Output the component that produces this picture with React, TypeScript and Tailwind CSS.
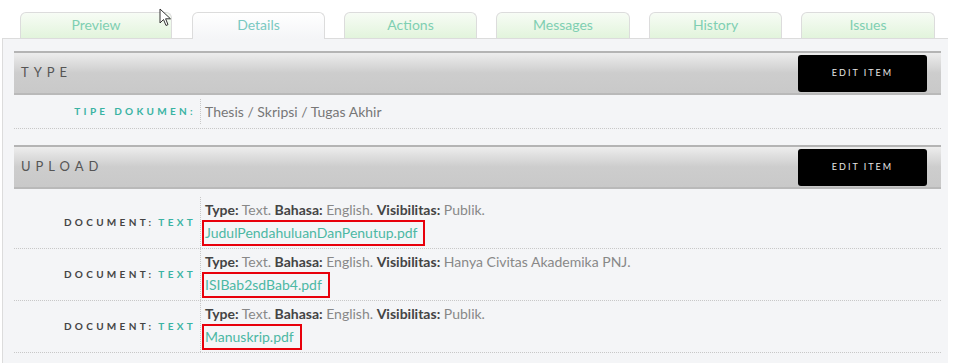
import React from "react";

const tabs = [
  { label: "Preview", w: "w-[152px]", active: false },
  { label: "Details", w: "w-[133px]", active: true },
  { label: "Actions", w: "w-[133px]", active: false },
  { label: "Messages", w: "w-[134px]", active: false },
  { label: "History", w: "w-[133px]", active: false },
  { label: "Issues", w: "w-[134px]", active: false },
];

const docs = [
  { vis: "Publik.", file: "JudulPendahuluanDanPenutup.pdf" },
  { vis: "Hanya Civitas Akademika PNJ.", file: "ISIBab2sdBab4.pdf" },
  { vis: "Publik.", file: "Manuskrip.pdf" },
];

function Header({ title }: { title: string }) {
  return (
    <div className="w-[927px] h-[44px] flex items-center justify-between pl-[7px] pr-[14px] border-t-2 border-b-2 border-t-[#b4b4b4] border-b-[#b9b9b9] bg-gradient-to-b from-[#ededed] via-[#cdcdcd] to-[#c9c9c9]">
      <span className="text-[13px] tracking-[5px] text-[#555]">{title}</span>
      <button className="w-[129px] h-[37px] bg-black rounded-[3px] text-[9px] tracking-[2px] text-[#e6e6e6]">
        EDIT ITEM
      </button>
    </div>
  );
}

export default function App() {
  return (
    <div
      className="relative w-[962px] h-[363px] overflow-hidden bg-white"
      style={{ fontFamily: "Lato, 'Noto Sans', sans-serif" }}
    >
      {/* tabs */}
      <div className="flex items-end pt-[12px] pl-[20px] gap-[19px]">
        {tabs.map((t, i) => (
          <div
            key={t.label}
            className={
              (i === 1 ? "ml-[1px] " : "") +
              t.w +
              " " +
              (t.active
                ? "relative z-10 h-[27px] -mb-px pb-[3px] rounded-t-[6px] border border-b-0 border-[#dcdcdc] bg-gradient-to-b from-white to-[#f4f5f7] text-[#7ac9c1]"
                : "h-[26px] pb-[3px] rounded-t-[6px] border border-b-0 border-[#dcdcdc] bg-gradient-to-b from-[#f7fcf5] to-[#e2f4dc] text-[#7fcfb2]") +
              " flex items-center justify-center text-[14px]"
            }
          >
            {t.label}
          </div>
        ))}
      </div>

      {/* panel */}
      <div className="ml-[2px] w-[946px] h-[330px] border-l border-t border-[#dcdcdc] bg-[#f4f5f7] pl-[11px] pt-[12px]">
        <Header title="TYPE" />
        <div className="w-[927px] h-[34px] flex border-b border-dotted border-[#c8c8c8]">
          <div className="w-[186px] flex items-center justify-end pr-[4px] text-[10px] font-bold tracking-[3.3px] text-[#3ab3a3]">
            TIPE DOKUMEN:
          </div>
          <div className="flex items-center pl-[4px] border-l border-dotted border-[#c8c8c8] my-[4px] text-[14px] text-[#777]">
            Thesis / Skripsi / Tugas Akhir
          </div>
        </div>

        <div className="mt-[16px]">
          <Header title="UPLOAD" />
        </div>
        <div className="mt-[8px]">
          {docs.map((d) => (
            <div key={d.file} className="w-[927px] h-[52px] flex border-b border-dotted border-[#c8c8c8]">
              <div className="w-[186px] flex items-center justify-end pr-[4px] text-[10px] font-bold tracking-[3.3px]">
                <span className="text-[#444]">DOCUMENT:</span>
                <span className="text-[#3ab3a3] ml-[4px]">TEXT</span>
              </div>
              <div className="flex flex-col pl-[1px] pt-[3px] border-l border-dotted border-[#c8c8c8]">
                <div className="h-[20px] pl-[3px] text-[14px] leading-[20px] text-[#888]">
                  <b className="text-[#444]">Type:</b> Text. <b className="text-[#444]">Bahasa:</b> English.{" "}
                  <b className="text-[#444]">Visibilitas:</b> {d.vis}
                </div>
                <div>
                  <span className="inline-block h-[26px] border-2 border-[#e8000b] pl-[1px] pr-[6px] text-[14px] leading-[22px] text-[#4cb8a4]">
                    {d.file}
                  </span>
                </div>
              </div>
            </div>
          ))}
        </div>
      </div>

      {/* mouse cursor */}
      <svg className="absolute left-[159px] top-[8px]" width="13" height="19" viewBox="0 0 13 19">
        <path d="M1 1 L1 15 L4.5 11.5 L7 17.5 L9 16.6 L6.6 10.8 L11.5 10.8 Z" fill="white" stroke="#333" strokeWidth="1" strokeLinejoin="round" />
      </svg>
    </div>
  );
}
